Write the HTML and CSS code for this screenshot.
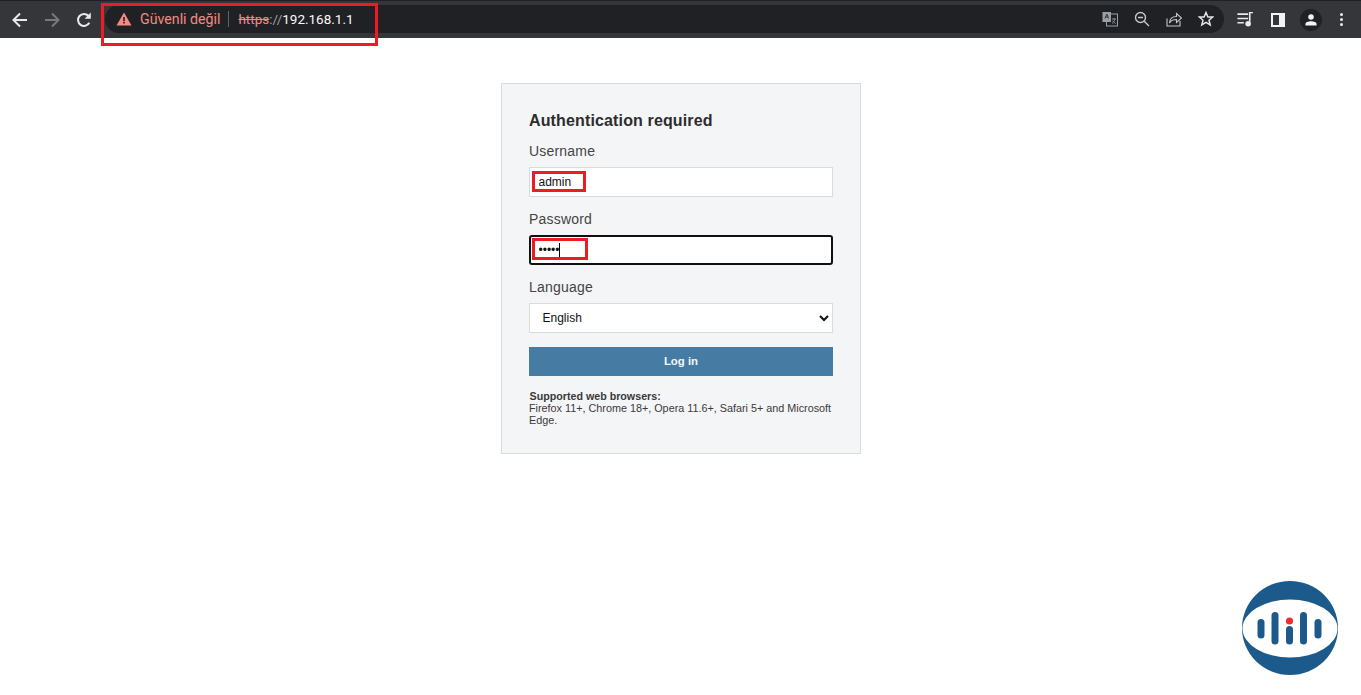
FILE: index.html
```html
<!DOCTYPE html>
<html lang="en">
<head>
<meta charset="utf-8">
<title>Authentication required</title>
<link rel="stylesheet" href="styles.css">
</head>
<body>
<header class="toolbar">
  <nav class="nav-buttons">
    <svg class="nav-icon" viewBox="0 0 20 20"><path d="M17 10H4M10 3.5 3.5 10l6.500 6.500" fill="none" stroke="#e8eaed" stroke-width="2"/></svg>
    <svg class="nav-icon" viewBox="0 0 20 20"><path d="M3 10h13M10 3.500 16.500 10 10 16.500" fill="none" stroke="#77797c" stroke-width="2"/></svg>
    <svg class="nav-icon" viewBox="0 0 20 20"><path d="M15.300 12.800A6 6 0 1 1 14.400 5.800" fill="none" stroke="#e8eaed" stroke-width="2"/><path d="M16.800 2.500v6.200h-6.200z" fill="#e8eaed"/></svg>
  </nav>
  <div class="omnibox">
    <svg class="warn" viewBox="0 0 16 14"><path d="M8 0.500 15.500 13.500H.5z" fill="#f28b82"/><path d="M7.200 5h1.600v4.200H7.200zM7.200 10h1.600v1.600H7.200z" fill="#202124"/></svg>
    <span class="warn-text">Güvenli değil</span>
    <span class="divider"></span>
    <span class="url"><span class="scheme">https</span><span class="slashes">://</span>192.168.1.1</span>
    <div class="omni-actions">
      <svg class="act" viewBox="0 0 16 16"><rect x="4.500" y="3" width="11" height="12" fill="none" stroke="#9aa0a6"/><rect x="0.500" y="1" width="8.500" height="10" fill="#9aa0a6"/><path d="M3 7.500 4.800 3l1.800 4.500M3.600 6h2.400" fill="none" stroke="#35363a"/><path d="M10 8h4M12 7v1M13 8c-.5 2-1.500 3.500-3 4.500M10.800 9.500c.6 1.300 1.500 2.300 3 3" fill="none" stroke="#9aa0a6" stroke-width=".8"/></svg>
      <svg class="act" viewBox="0 0 16 16"><circle cx="6.500" cy="6.500" r="5" fill="none" stroke="#c4c7c5" stroke-width="1.400"/><path d="M4 6.500h5M10.200 10.200 15 15" fill="none" stroke="#c4c7c5" stroke-width="1.400"/></svg>
      <svg class="act" viewBox="0 0 16 16"><path d="M1 7.500v7.500h13v-5" fill="none" stroke="#c4c7c5" stroke-width="1.100"/><path d="M3.500 12c.3-4 3-6.500 7-6.500V2.500l5 4.500-5 4.500V8.500c-3 0-5.500 1-7 3.500z" fill="none" stroke="#c4c7c5" stroke-width="1.100"/></svg>
      <svg class="act" viewBox="0 0 16 16"><path d="M8 1.500 9.900 6h4.800l-3.700 3.200 1.200 4.800L8 11.400 3.800 14 5 9.200 1.300 6h4.800z" fill="none" stroke="#e3e5e8" stroke-width="1.500"/></svg>
    </div>
  </div>
  <div class="browser-actions">
    <svg class="tool media" viewBox="0 0 16 14"><path d="M0 2h10M0 6h10M0 10h6" stroke="#e8eaed" stroke-width="1.500"/><path d="M14.500 0.500H11.500V9" fill="none" stroke="#e8eaed" stroke-width="1.500"/><circle cx="10" cy="11" r="2.600" fill="#e8eaed"/></svg>
    <svg class="tool panel-icon" viewBox="0 0 14 14"><path d="M0 0h14v14H0zM2 2v10h6V2z" fill="#f1f3f4" fill-rule="evenodd"/></svg>
    <span class="avatar"><svg viewBox="0 0 14 14" class="avatar-icon"><circle cx="7" cy="3.500" r="3.200" fill="#f1f3f4"/><path d="M0.500 13.500v-1.800c0-2 3.500-3.200 6.500-3.200s6.500 1.200 6.500 3.200v1.800z" fill="#f1f3f4"/></svg></span>
    <span class="dots"><i></i><i></i><i></i></span>
  </div>
</header>

<main class="page">
  <form class="panel">
    <h1 class="title">Authentication required</h1>
    <div class="field">
      <label class="label" for="user">Username</label>
      <input class="control" id="user" type="text" value="admin">
    </div>
    <div class="field">
      <label class="label" for="pass">Password</label>
      <input class="control control-focus" id="pass" type="password" value="admin">
    </div>
    <div class="field">
      <label class="label" for="lang">Language</label>
      <select class="control select" id="lang"><option>English</option></select>
    </div>
    <button class="login" type="button">Log in</button>
    <p class="note"><strong class="note-head">Supported web browsers:</strong><br>Firefox 11+, Chrome 18+, Opera 11.6+, Safari 5+ and Microsoft Edge.</p>
  </form>
</main>

<div class="mark mark-url"></div>
<div class="mark mark-user"></div>
<div class="mark mark-pass"></div>
<div class="caret"></div>

<svg class="logo" viewBox="0 0 96 94">
  <ellipse cx="48" cy="47" rx="48" ry="47" fill="#1c5a8c"/>
  <ellipse cx="48" cy="47.500" rx="47.500" ry="29" fill="#fff"/>
  <g fill="#1c5a8c">
    <rect x="15.500" y="38" width="7" height="19.500" rx="3.500"/>
    <rect x="29.500" y="31" width="7" height="32.500" rx="3.500"/>
    <rect x="44" y="45" width="7" height="18.500" rx="3.500"/>
    <rect x="58" y="31" width="7" height="32.500" rx="3.500"/>
    <rect x="72.500" y="38" width="7" height="19.500" rx="3.500"/>
  </g>
  <circle cx="47.500" cy="40" r="3.600" fill="#ee2e2e"/>
</svg>
</body>
</html>
```
FILE: styles.css
```css
* { box-sizing: border-box; }
html, body { margin: 0; padding: 0; height: 100%; overflow: hidden; }
body { background: #fff; font-family: "Liberation Sans", Arial, sans-serif; position: relative; }

.toolbar {
  height: 38px;
  background: #35363a;
  border-top: 1px solid #202124;
  display: flex;
  align-items: center;
  padding-left: 10px;
}
.nav-buttons { display: flex; gap: 12px; width: 95px; flex: none; }
.nav-icon { width: 20px; height: 20px; display: block; }

.omnibox {
  flex: none;
  width: 1119px;
  height: 28px;
  margin-bottom: 1px;
  border-radius: 14px;
  background: #202124;
  display: flex;
  align-items: center;
  padding-left: 11px;
}
.warn { width: 16px; height: 14px; flex: none; }
.warn-text { margin-left: 8px; font: 14.200px "Roboto", "Liberation Sans", sans-serif; color: #f28b82; }
.divider { width: 1px; height: 16px; background: #5f6368; margin: 0 9px 0 8px; }
.url { font: 13.500px "Roboto", "Liberation Sans", sans-serif; color: #f8f9fa; }
.scheme { color: #f28b82; text-decoration: line-through; }
.slashes { color: #9aa0a6; }
.omni-actions { margin-left: auto; display: flex; gap: 16px; padding-right: 10px; }
.act { width: 16px; height: 16px; display: block; }

.browser-actions { display: flex; align-items: center; padding-left: 13px; }
.tool { display: block; }
.media { width: 18px; height: 15px; }
.panel-icon { width: 14px; height: 14px; margin-left: 16px; }
.avatar {
  width: 22px; height: 22px; border-radius: 50%;
  background: #202124;
  margin-left: 15px;
  display: flex; align-items: center; justify-content: center;
}
.avatar-icon { width: 12px; height: 12px; display: block; }
.dots { display: flex; flex-direction: column; gap: 2px; margin-left: 18px; }
.dots i { width: 3px; height: 3px; border-radius: 50%; background: #e8eaed; display: block; }

.page { display: flex; justify-content: center; padding-top: 45px; }
.panel {
  width: 360px;
  height: 371px;
  background: #f4f5f7;
  border: 1px solid #d9dbdd;
  padding: 28px 27px 0;
}
.title { margin: 0; font-size: 16px; line-height: 18px; font-weight: bold; color: #2d2d2d; letter-spacing: .14px; padding-left: .5px; }
.field { margin-top: 13px; }
.field + .field { margin-top: 14px; }
.label { display: block; font-size: 14px; line-height: 16px; color: #444; margin-bottom: 8px; letter-spacing: .2px; padding-left: .5px; }
.control {
  display: block;
  width: 100%;
  height: 30px;
  background: #fff;
  border: 1px solid #d9dbdd;
  border-radius: 0;
  padding: 0 9px;
  margin: 0;
  font-family: "Liberation Sans", Arial, sans-serif;
  font-size: 12px;
  color: #111;
  outline: none;
}
.control-focus { border: 2px solid #101010; border-radius: 3px; padding: 0 8px; }
.select { padding: 0 9px; }
.login {
  display: block;
  width: 100%;
  height: 29px;
  margin-top: 14px;
  padding: 0 0 2px 1px;
  border: 0;
  background: #467ca4;
  color: #f4f5f7;
  font-family: "Liberation Sans", Arial, sans-serif;
  font-size: 11.400px;
  font-weight: bold;
}
.note { margin: 14px 0 0; font-size: 10.800px; line-height: 12px; color: #3a3a3a; padding-left: .5px; }
.note-head { font-weight: bold; padding-left: .5px; font-size: 10.700px; }

.mark { position: absolute; border: 3px solid #ed1c24; pointer-events: none; }
.mark-url { left: 101px; top: 3px; width: 277px; height: 43px; }
.mark-user { left: 532px; top: 171px; width: 54px; height: 21px; }
.mark-pass { left: 532px; top: 238px; width: 56px; height: 22px; }
.caret { position: absolute; left: 559px; top: 243px; width: 1px; height: 14px; background: #000; }
.logo { position: absolute; left: 1242px; top: 581px; width: 96px; height: 94px; }
```
